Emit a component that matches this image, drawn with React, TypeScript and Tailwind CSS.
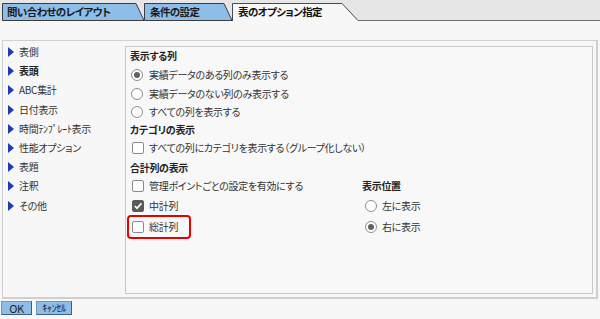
import React from "react";

const font = "font-['Meiryo_UI','Noto_Sans_CJK_JP',sans-serif] [font-feature-settings:'palt']";

function Radio({ checked }: { checked?: boolean }) {
  return (
    <span className="relative inline-flex h-[12px] w-[12px] shrink-0 items-center justify-center rounded-full border border-[#8e8e8e] bg-white">
      {checked && <span className="h-[6px] w-[6px] rounded-full bg-[#606060]" />}
    </span>
  );
}

function Check({ checked }: { checked?: boolean }) {
  return (
    <span
      className={
        "inline-flex h-[12px] w-[12px] shrink-0 items-center justify-center rounded-[2px] border " +
        (checked ? "border-[#5a5a5a] bg-[#5a5a5a]" : "border-[#8a8a8a] bg-white")
      }
    >
      {checked && (
        <svg width="10" height="10" viewBox="0 0 10 10">
          <path d="M1.8 5 L4 7.2 L8.4 2.4" fill="none" stroke="#fff" strokeWidth="1.7" />
        </svg>
      )}
    </span>
  );
}

function Tri() {
  return (
    <svg width="6" height="10" viewBox="0 0 6 10" className="shrink-0">
      <path d="M0 0 L6 5 L0 10 Z" fill="#1d3bb5" />
    </svg>
  );
}

const sideItems = ["表側", "表頭", "ABC集計", "日付表示", "時間ﾃﾝﾌﾟﾚｰﾄ表示", "性能オプション", "表題", "注釈", "その他"];

export default function App() {
  return (
    <div className={"h-[319px] w-[600px] overflow-hidden bg-[#f7f7f7] text-[10px] leading-none tracking-[-0.3px] text-[#333] " + font}>
      {/* tab strip */}
      <div className="flex h-[21px] bg-[#e6e6e6]">
        <div className="relative ml-[2px] h-[21px] w-[142px] shrink-0">
          <svg className="absolute inset-0" width="143" height="21" viewBox="0 0 143 21">
            <polygon points="0.5,20.5 0.5,3.5 134,3.5 142,20.5" fill="#8dbde9" stroke="#3c3c3c" strokeWidth="1" />
          </svg>
          <span className="relative flex h-[21px] items-center pl-[5px] pt-[3px] text-[10.5px] font-semibold tracking-[-0.6px] text-[#1a1a1a]">問い合わせのレイアウト</span>
        </div>
        <div className="relative h-[21px] w-[88px] shrink-0">
          <svg className="absolute inset-0" width="89" height="21" viewBox="0 0 89 21">
            <polygon points="0.5,20.5 0.5,3.5 80,3.5 88,20.5" fill="#8dbde9" stroke="#3c3c3c" strokeWidth="1" />
          </svg>
          <span className="relative flex h-[21px] items-center pl-[6px] pt-[3px] text-[10.5px] font-semibold tracking-[-0.6px] text-[#1a1a1a]">条件の設定</span>
        </div>
        <div className="relative h-[21px] w-[126px] shrink-0">
          <svg className="absolute inset-0" width="127" height="21" viewBox="0 0 127 21">
            <polygon points="0,21 0,3 110,3 126,21" fill="#f7f7f7" />
            <polyline points="0.5,21 0.5,3.5 110,3.5 126,20.5" fill="none" stroke="#4a4a4a" strokeWidth="1" />
          </svg>
          <span className="relative flex h-[21px] items-center pl-[6px] pt-[3px] text-[10.5px] font-bold tracking-[-0.6px] text-[#111]">表のオプション指定</span>
        </div>
        <div className="flex-1 border-b-[1.5px] border-[#707070]" />
      </div>

      {/* outer panel */}
      <div className="ml-[2px] mt-[19px] flex h-[259px] w-[596px] border border-r-2 border-b-2 border-[#cfcfcf]">
        <div className="w-[122px] shrink-0 pt-[1.5px]">
          {sideItems.map((s, i) => (
            <div key={s} className="flex h-[19.2px] items-center gap-[5px] pl-[5px]">
              <Tri />
              <span className={i === 1 ? "font-bold text-[#222]" : ""}>{s}</span>
            </div>
          ))}
        </div>
        <div className="mb-[3px] mr-[3px] mt-[5px] flex-1 border border-[#c8c8c8] bg-[#f8f8f8]">
          <div className="flex h-[18px] items-center pl-[4px] font-bold text-[#222]">表示する列</div>
          <div className="flex h-[19px] items-center gap-[6px] pl-[5px]">
            <Radio checked />
            <span>実績データのある列のみ表示する</span>
          </div>
          <div className="flex h-[19px] items-center gap-[6px] pl-[5px]">
            <Radio />
            <span>実績データのない列のみ表示する</span>
          </div>
          <div className="flex h-[18px] items-center gap-[6px] pl-[5px]">
            <Radio />
            <span>すべての列を表示する</span>
          </div>
          <div className="flex h-[17px] items-center pl-[4px] font-bold text-[#222]">カテゴリの表示</div>
          <div className="flex h-[20px] items-center gap-[5px] pl-[6px]">
            <Check />
            <span>すべての列にカテゴリを表示する（グループ化しない）</span>
          </div>
          <div className="flex h-[19px] items-center pl-[4px] font-bold text-[#222]">合計列の表示</div>
          <div className="flex">
            <div className="w-[236px] shrink-0">
              <div className="flex h-[18px] items-center gap-[5px] pl-[6px]">
                <Check />
                <span>管理ポイントごとの設定を有効にする</span>
              </div>
              <div className="flex h-[22px] items-center gap-[5px] pl-[6px]">
                <Check checked />
                <span>中計列</span>
              </div>
              <div className="relative flex h-[19px] items-center gap-[5px] pl-[6px]">
                <Check />
                <span>総計列</span>
                <span className="pointer-events-none absolute left-[1px] top-[-2px] h-[24px] w-[64px] rounded-[4px] border-2 border-[#e60000]" />
              </div>
            </div>
            <div>
              <div className="flex h-[18px] items-center font-bold text-[#222]">表示位置</div>
              <div className="flex h-[22px] items-center gap-[5px] pl-[3px]">
                <Radio />
                <span>左に表示</span>
              </div>
              <div className="flex h-[19px] items-center gap-[5px] pl-[3px]">
                <Radio checked />
                <span>右に表示</span>
              </div>
            </div>
          </div>
        </div>
      </div>

      {/* buttons */}
      <div className="ml-[1px] mt-[2px] flex gap-[4px]">
        <button className="flex h-[14px] w-[31px] items-center justify-center border border-[#6f95ba] border-r-[#3f5f80] border-b-[#3f5f80] bg-[#8dbde9] text-[11px] text-[#222]">
          OK
        </button>
        <button className="flex h-[14px] w-[36px] items-center justify-center border border-[#6f95ba] border-r-[#3f5f80] border-b-[#3f5f80] bg-[#8dbde9] text-[10px] text-[#222]">
          ｷｬﾝｾﾙ
        </button>
      </div>
    </div>
  );
}
